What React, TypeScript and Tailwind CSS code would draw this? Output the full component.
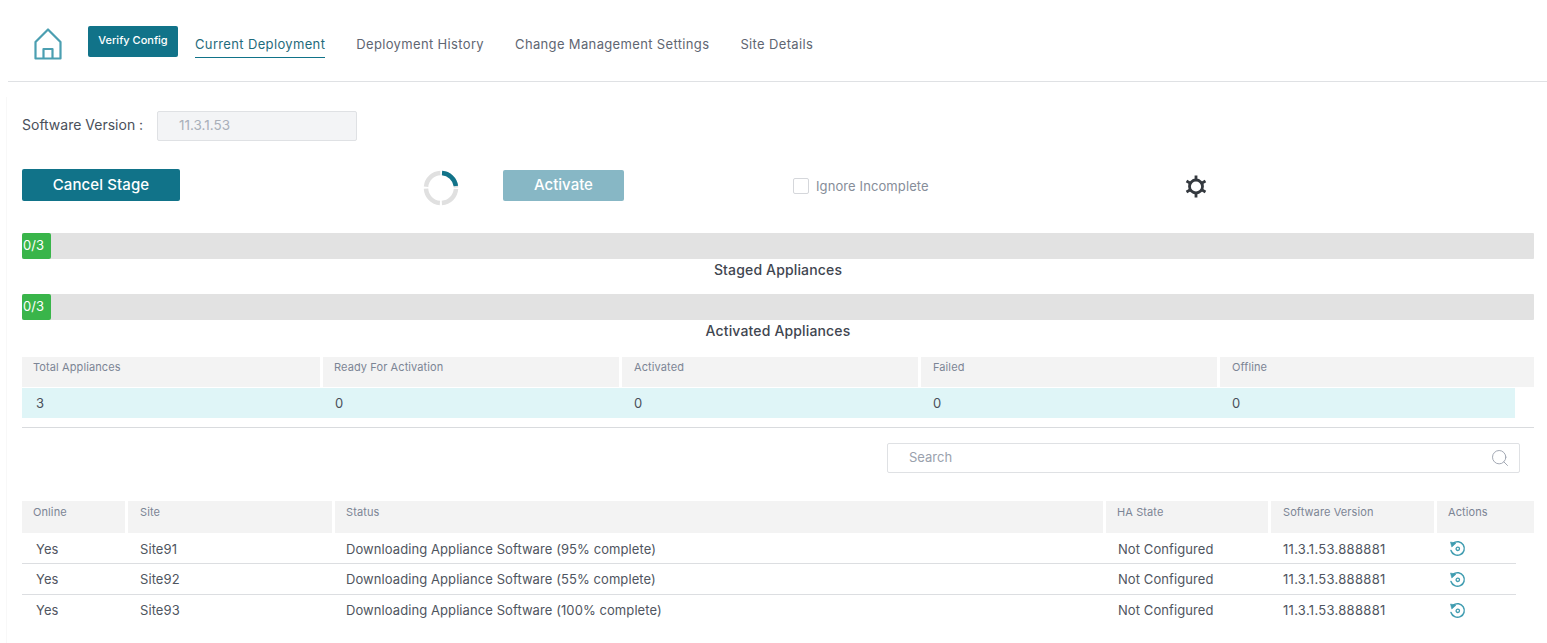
import React from "react";
import { Search } from "lucide-react";

const TABS = ["Deployment History", "Change Management Settings", "Site Details"];
const SUMMARY = [
  { label: "Total Appliances", value: "3", labelPad: "pl-[11px]", valuePad: "pl-[14px]" },
  { label: "Ready For Activation", value: "0", labelPad: "pl-[11px]", valuePad: "pl-[12px]" },
  { label: "Activated", value: "0", labelPad: "pl-[12px]", valuePad: "pl-[12px]" },
  { label: "Failed", value: "0", labelPad: "pl-[12px]", valuePad: "pl-[12px]" },
  { label: "Offline", value: "0", labelPad: "pl-[12px]", valuePad: "pl-[12px]" },
];
const COLUMNS = [
  { label: "Online", pad: "pl-[11px]" },
  { label: "Site", pad: "pl-[12px]" },
  { label: "Status", pad: "pl-[11px]" },
  { label: "HA State", pad: "pl-[11px]" },
  { label: "Software Version", pad: "pl-[12px]" },
  { label: "Actions", pad: "pl-[11px]" },
];
const ROWS = [
  { site: "Site91", status: "Downloading Appliance Software (95% complete)" },
  { site: "Site92", status: "Downloading Appliance Software (55% complete)" },
  { site: "Site93", status: "Downloading Appliance Software (100% complete)" },
];

const ProgressBar = ({ label }: { label: string }) => (
  <div>
    <div className="h-[26px] bg-[#e2e2e2] rounded-[1px]">
      <div className="h-full w-[29px] bg-[#39b54a] rounded-[2px] text-white text-[13px] leading-[24px] pl-[1px]">0/3</div>
    </div>
    <div className="h-[35px] text-center text-[14px] tracking-[0.15px] leading-[22px] font-medium text-[#3f4650]">{label}</div>
  </div>
);

const RestoreIcon = () => (
  <svg width="17" height="17" viewBox="0 0 17 17" fill="none" stroke="#3f9cb0" strokeWidth="1.5">
    <path d="M4.2 3.2 A6.8 6.8 0 1 1 2 10.5" strokeLinecap="round" />
    <path d="M1.5 2 L7 3.2 L2.8 7 Z" fill="#3f9cb0" strokeWidth="0.6" strokeLinejoin="round" />
    <circle cx="8.8" cy="8.8" r="1.7" strokeWidth="1.3" />
  </svg>
);

const Spinner = () => (
  <svg width="36" height="36" viewBox="0 0 36 36" fill="none" strokeWidth="4.5">
    <circle cx="18" cy="18" r="15" stroke="#e0e0e0" strokeDasharray="21.5 2.06" strokeDashoffset="-1" />
    <path d="M19 3.03 A15 15 0 0 1 32.9 16" stroke="#117389" />
  </svg>
);

export default function App() {
  return (
    <div className="w-[1547px] h-[643px] overflow-hidden bg-white font-['Inter',sans-serif] text-[#4a505a]">
      <header className="ml-[8px] h-[82px] border-b border-[#dfe1e4] flex items-start pt-[26px]">
        <svg className="ml-[26px] mt-[2px]" width="28" height="32" viewBox="0 0 28 32" fill="none" stroke="#4b9fb1" strokeWidth="2.2" strokeLinejoin="round">
          <path d="M14 1.5 L26.5 14 V30.5 H1.5 V14 Z" />
          <path d="M9.5 30.5 V21 H18.5 V30.5" />
        </svg>
        <button className="ml-[26px] w-[90px] h-[31px] bg-[#117389] rounded-[2px] text-white text-[11px] font-medium pb-[2px]">Verify Config</button>
        <nav className="ml-[17px] flex gap-[31px] text-[13px] tracking-[0.35px]">
          <a className="h-[32px] pt-[8px] leading-[20px] border-b border-[#117389] text-[#1f6b7c]">Current Deployment</a>
          {TABS.map((tab) => (
            <a key={tab} className="h-[32px] pt-[8px] leading-[20px] text-[#5f6672]">{tab}</a>
          ))}
        </nav>
      </header>

      <main className="ml-[6px] mt-[15px] h-[546px] pt-[14px] pl-[15px] pr-[13px] border-l border-[#f8f8f8]">
        <div className="flex items-center h-[30px]">
          <label className="w-[135px] pb-[3px] text-[14px] text-[#4a505a]">Software Version :</label>
          <div className="w-[200px] h-[30px] bg-[#f3f4f6] border border-[#dfe1e4] rounded-[2px] pl-[21px] text-[13.5px] leading-[26px] text-[#a9afb9]">11.3.1.53</div>
        </div>

        <div className="flex items-center h-[32px] mt-[28px]">
          <button className="w-[158px] h-[32px] bg-[#117389] rounded-[2px] text-white text-[15px] tracking-[0.1px] font-medium">Cancel Stage</button>
          <div className="ml-[243px] mt-[5px]"><Spinner /></div>
          <button className="ml-[44px] w-[121px] h-[31px] bg-[#87b7c5] rounded-[2px] text-white text-[15px] font-medium">Activate</button>
          <span className="ml-[169px] mt-[2px] w-[16px] h-[16px] border border-[#d5d7db] rounded-[2px]" />
          <span className="ml-[7px] mt-[3px] text-[13px] tracking-[0.1px] text-[#868d99]">Ignore Incomplete</span>
          <svg className="ml-[255px] mt-[2px]" width="24" height="25" viewBox="0 0 24 24" fill="none" stroke="#34393f" strokeWidth="2.8">
            <circle cx="12" cy="12" r="6.5" />
            <path d="M12 1v4.5M12 18.5V23M2.5 6.5l3.9 2.2M17.6 15.3l3.9 2.2M2.5 17.5l3.9-2.2M17.6 8.7l3.9-2.2" />
          </svg>
        </div>

        <div className="mt-[32px]"><ProgressBar label="Staged Appliances" /></div>
        <ProgressBar label="Activated Appliances" />

        <div className="mt-[2px] grid grid-cols-[298px_296px_296px_296px_314px] gap-x-[3px] h-[30px]">
          {SUMMARY.map((item) => (
            <div key={item.label} className={`bg-[#f3f3f3] ${item.labelPad} pt-[2px] text-[11px] tracking-[0.1px] leading-[16px] text-[#7c8595]`}>{item.label}</div>
          ))}
        </div>
        <div className="mt-[1px] mr-[19px] h-[30px] bg-[#dff5f7] grid grid-cols-[298px_296px_296px_296px_1fr] gap-x-[3px] text-[13px] leading-[31px] text-[#4a505a]">
          {SUMMARY.map((item) => (
            <div key={item.label} className={item.valuePad}>{item.value}</div>
          ))}
        </div>
        <div className="mt-[9px] h-px bg-[#d9dbde]" />

        <div className="mt-[15px] ml-[865px] w-[633px] h-[30px] border border-[#dfe1e4] rounded-[2px] flex items-center justify-between pl-[21px] pr-[9px]">
          <span className="text-[13px] text-[#9aa1ad]">Search</span>
          <Search size={20} strokeWidth={1.1} className="text-[#9aa1ad]" />
        </div>

        <div className="mt-[28px] grid grid-cols-[103px_204px_768px_162px_163px_97px] gap-x-[3px] h-[32px]">
          {COLUMNS.map((col) => (
            <div key={col.label} className={`bg-[#f3f3f3] ${col.pad} pt-[3px] text-[11px] tracking-[0.1px] leading-[16px] text-[#7c8595]`}>{col.label}</div>
          ))}
        </div>
        <div className="mr-[18px]">
          {ROWS.map((row, i) => (
            <div key={row.site} className={`grid grid-cols-[103px_204px_768px_162px_163px_1fr] gap-x-[3px] h-[31px] text-[13px] tracking-[0.08px] text-[#4f5560] ${i === 0 ? "leading-[33px]" : "leading-[31px]"} ${i < 2 ? "border-b border-[#dcdee1]" : ""}`}>
              <div className="pl-[14px]">Yes</div>
              <div className="pl-[12px]">{row.site}</div>
              <div className="pl-[11px]">{row.status}</div>
              <div className="pl-[12px]">Not Configured</div>
              <div className="pl-[12px] tracking-[0.3px]">11.3.1.53.888881</div>
              <div className="pl-[12px] pt-[7px]"><RestoreIcon /></div>
            </div>
          ))}
        </div>
      </main>
    </div>
  );
}
